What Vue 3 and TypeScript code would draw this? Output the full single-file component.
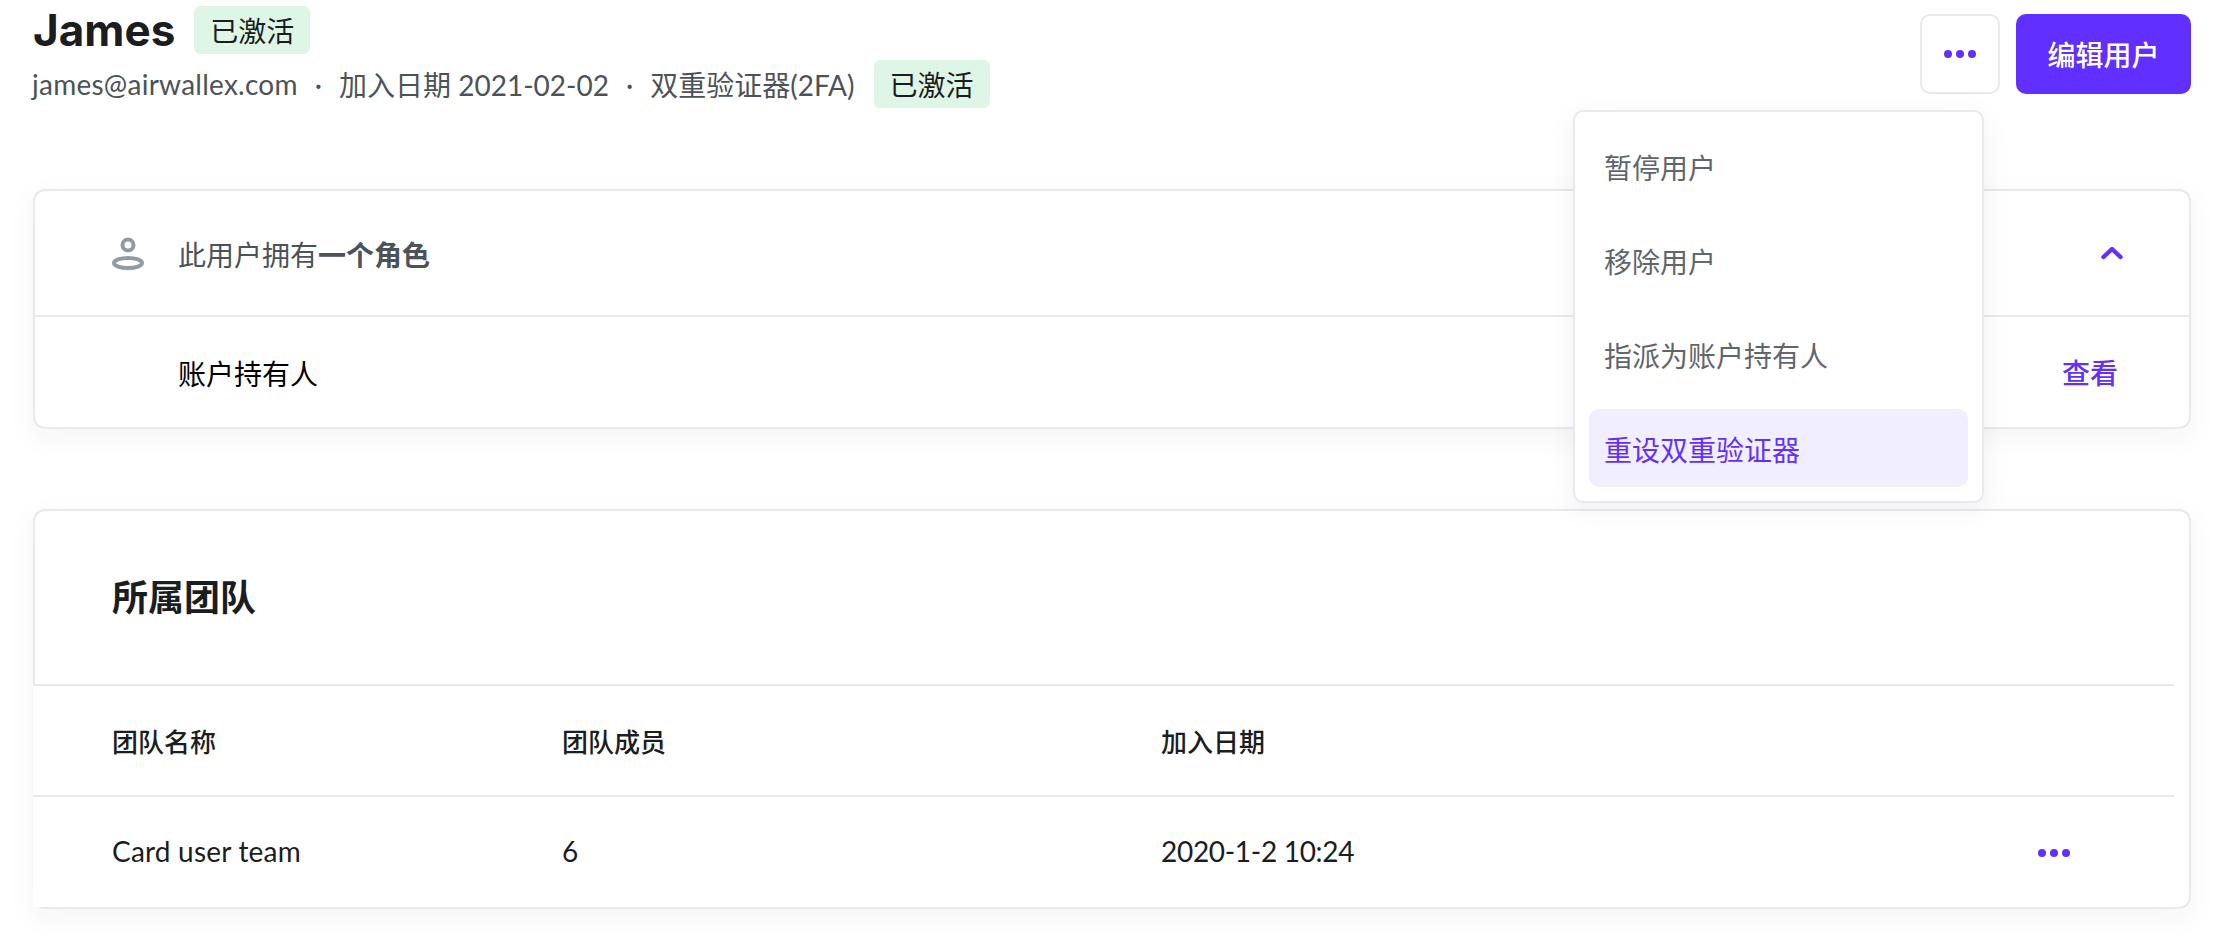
<script setup lang="ts">
const menuItems = ["暂停用户", "移除用户", "指派为账户持有人", "重设双重验证器"];
const activeItem = "重设双重验证器";

const teams = [{ name: "Card user team", members: 6, joined: "2020-1-2 10:24" }];
</script>

<template>
	<div class="page">
		<header class="top">
			<div class="who">
				<div class="name-row">
					<h1 class="name">James</h1>
					<span class="badge">已激活</span>
				</div>
				<div class="sub-row">
					<span class="email">james@airwallex.com</span>
					<span class="sep">·</span>
					<span>加入日期 2021-02-02</span>
					<span class="sep">·</span>
					<span>双重验证器(2FA)</span>
					<span class="badge badge-dark">已激活</span>
				</div>
			</div>
			<div class="actions">
				<button class="btn-more" aria-label="更多">
					<span class="dots"><i></i><i></i><i></i></span>
				</button>
				<button class="btn-edit">编辑用户</button>
			</div>
			<ul class="menu">
				<li v-for="item in menuItems" :key="item" class="menu-item" :class="{ active: item === activeItem }">
					{{ item }}
				</li>
			</ul>
		</header>

		<section class="card roles">
			<div class="roles-head">
				<svg class="person" width="34" height="34" viewBox="0 0 34 34" fill="none" stroke="#939aa3" stroke-width="4">
					<circle cx="17" cy="9" r="5.5" />
					<ellipse cx="17" cy="27" rx="14" ry="5" />
				</svg>
				<span class="roles-title">此用户拥有<b>一个角色</b></span>
				<svg class="chevron" width="24" height="14" viewBox="0 0 24 14" fill="none" stroke="#612fff" stroke-width="4.4" stroke-linecap="round" stroke-linejoin="round">
					<path d="M3.5 11 L12 3 L20.5 11" />
				</svg>
			</div>
			<div class="roles-row">
				<span>账户持有人</span>
				<a class="link">查看</a>
			</div>
		</section>

		<section class="card teams">
			<h2 class="teams-title">所属团队</h2>
			<div class="table">
				<div class="tr th">
					<span>团队名称</span>
					<span>团队成员</span>
					<span>加入日期</span>
					<span></span>
				</div>
				<div v-for="team in teams" :key="team.name" class="tr td">
					<span class="team-name">{{ team.name }}</span>
					<span>{{ team.members }}</span>
					<span class="joined">{{ team.joined }}</span>
					<span class="dots row-dots"><i></i><i></i><i></i></span>
				</div>
			</div>
		</section>
	</div>
</template>

<style scoped>
.page {
	width: 2224px;
	height: 940px;
	box-sizing: border-box;
	padding: 6px 33px 0;
	overflow: hidden;
	background: #fff;
	font-family: Lato, "Noto Sans CJK SC", sans-serif;
	color: #1a1d21;
}

.top {
	position: relative;
	display: flex;
	justify-content: space-between;
	align-items: flex-start;
	height: 102px;
	margin-bottom: 81px;
}

.name-row,
.sub-row {
	display: flex;
	align-items: center;
	height: 48px;
}

.sub-row {
	margin-top: 6px;
	font-size: 28px;
	color: #4c5259;
}

.email {
	margin-left: -1px;
	letter-spacing: 0.25px;
}

.name {
	margin: 0 19px 0 0;
	font-family: Inter, sans-serif;
	font-size: 44px;
	font-weight: 700;
	line-height: 48px;
}

.sep {
	margin: 0 17px;
}

.badge {
	display: inline-flex;
	align-items: center;
	justify-content: center;
	width: 116px;
	height: 48px;
	border-radius: 6px;
	background: #dff6e7;
	font-size: 28px;
	color: #1a1d21;
}

.badge-dark {
	margin-left: 19px;
}

.actions {
	display: flex;
	gap: 16px;
	margin-top: 8px;
}

.btn-more {
	display: flex;
	align-items: center;
	justify-content: center;
	width: 80px;
	height: 80px;
	padding: 0;
	border: 2px solid #e9e8ee;
	border-radius: 10px;
	background: #fff;
}

.btn-edit {
	width: 175px;
	height: 80px;
	padding: 0;
	border: 0;
	border-radius: 10px;
	background: #612fff;
	color: #fff;
	font: 500 28px Lato, "Noto Sans CJK SC", sans-serif;
}

.dots {
	display: flex;
	gap: 4px;
}

.dots i {
	width: 8px;
	height: 8px;
	border-radius: 50%;
	background: #612fff;
}

.row-dots {
	margin-top: 4px;
}

.menu {
	position: absolute;
	z-index: 2;
	top: 104px;
	right: 207px;
	width: 411px;
	box-sizing: border-box;
	margin: 0;
	padding: 15px 14px 14px;
	list-style: none;
	display: flex;
	flex-direction: column;
	gap: 16px;
	border: 2px solid #e9e8ee;
	border-radius: 10px;
	background: #fff;
	box-shadow: 0 6px 30px rgba(30, 30, 60, 0.06);
}

.menu-item {
	display: flex;
	align-items: center;
	height: 78px;
	box-sizing: border-box;
	padding: 2px 15px 0;
	border-radius: 10px;
	font-size: 28px;
	color: #5f666e;
}

.menu-item.active {
	background: #f1efff;
	color: #612fff;
}

.card {
	position: relative;
	box-sizing: border-box;
	width: 2158px;
	border: 2px solid #e9e8ee;
	border-radius: 12px;
	background: #fff;
	box-shadow: 0 8px 30px rgba(30, 30, 60, 0.05);
}

.roles {
	height: 240px;
	margin-bottom: 80px;
}

.roles-head {
	display: flex;
	align-items: center;
	height: 126px;
	box-sizing: border-box;
	padding: 0 65px 0 76px;
	border-bottom: 2px solid #e9e8ee;
}

.person {
	margin-right: 33px;
}

.roles-title {
	flex: 1;
	padding-top: 2px;
	font-size: 28px;
	color: #4c5259;
}

.roles-title b {
	font-weight: 700;
}

.roles-row {
	display: flex;
	align-items: center;
	justify-content: space-between;
	height: 110px;
	box-sizing: border-box;
	padding: 2px 71px 0 143px;
	font-size: 28px;
	color: #000;
}

.link {
	margin-top: -2px;
	font-weight: 500;
	color: #612fff;
}

.teams {
	height: 400px;
}

.teams-title {
	display: flex;
	align-items: center;
	height: 173px;
	margin: 0;
	padding-left: 77px;
	padding-bottom: 5px;
	box-sizing: border-box;
	font-size: 36px;
	font-weight: 700;
}

.table {
	margin-left: -2px;
	margin-right: 15px;
	background: #fff;
}

.tr {
	display: grid;
	grid-template-columns: 450px 599px 1fr 44px;
	align-items: center;
	box-sizing: border-box;
	padding: 0 92px 0 79px;
	border-top: 2px solid #e9e8ee;
}

.th {
	height: 111px;
	font-size: 26px;
	font-weight: 500;
}

.td {
	height: 112px;
	padding-bottom: 2px;
	font-size: 28px;
}

.team-name {
	letter-spacing: 0.2px;
}

.joined {
	letter-spacing: -0.3px;
}
</style>

<style>
html,
body {
	margin: 0;
	background: #fff;
}
</style>
